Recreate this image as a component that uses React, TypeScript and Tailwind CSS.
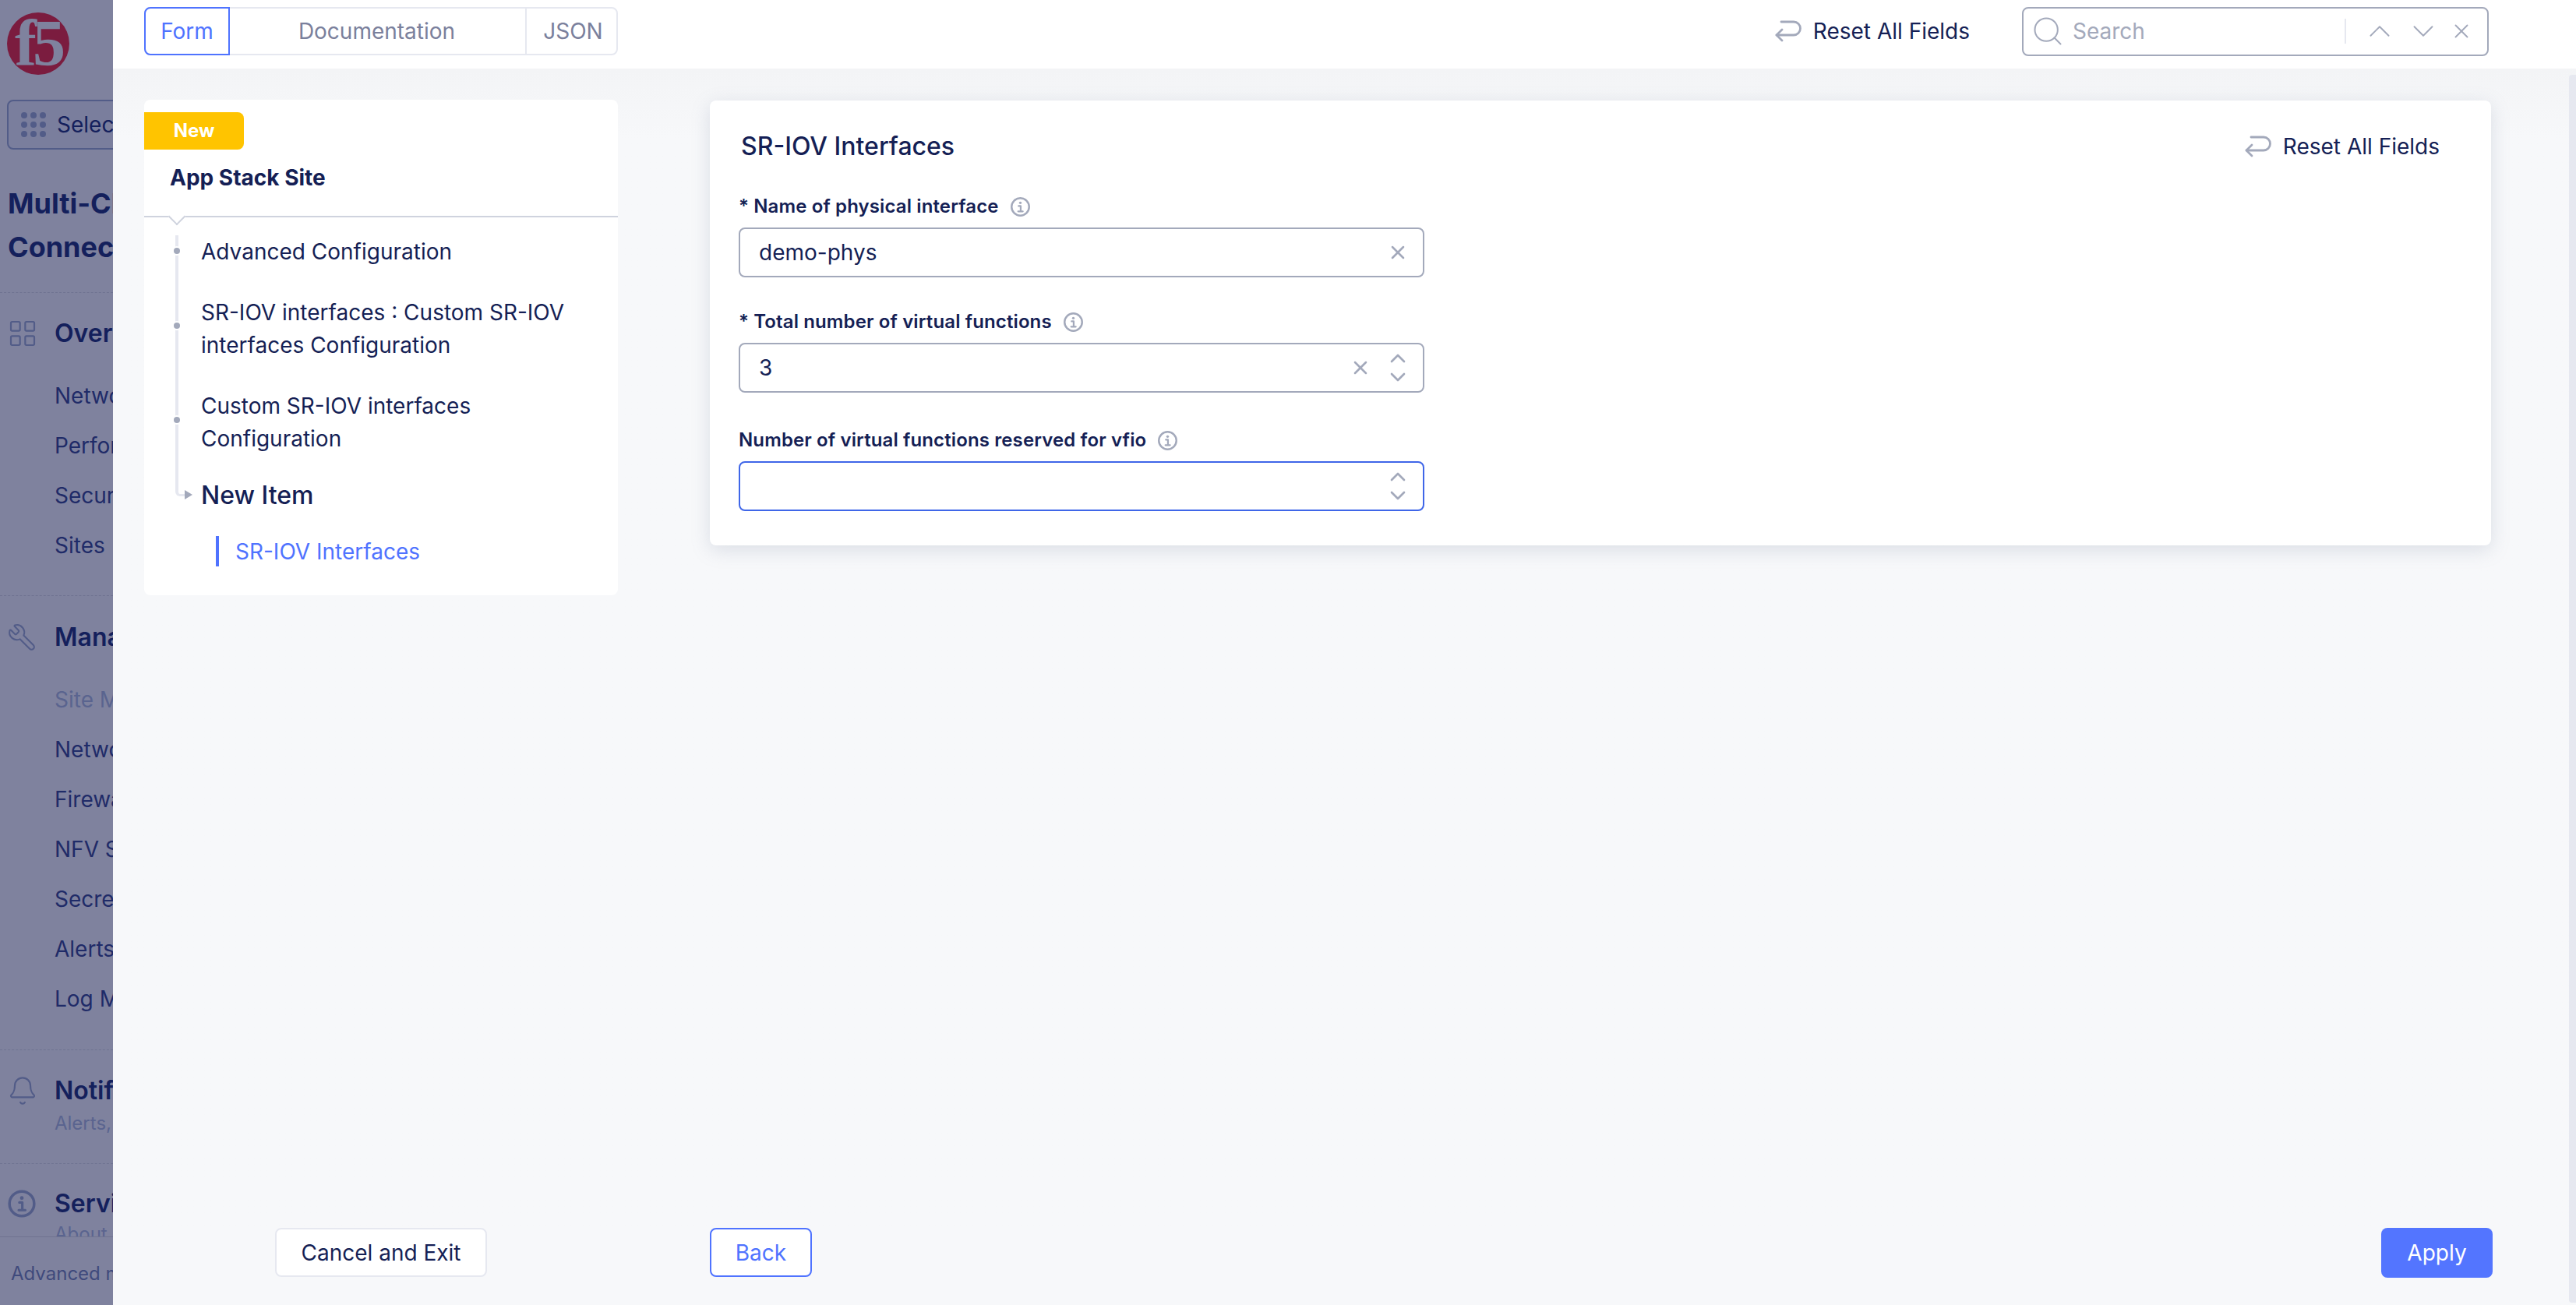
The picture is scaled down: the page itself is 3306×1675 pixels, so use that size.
import { X, ChevronUp, ChevronDown, Search, Bell, Wrench, LayoutGrid } from "lucide-react";

function ResetIcon({ className }: { className?: string }) {
  return (
    <svg viewBox="0 0 34 28" className={className} fill="none" stroke="#a3a9bb" strokeWidth="2.8" strokeLinecap="round" strokeLinejoin="round">
      <path d="M8 2 H24 a8.5 8.5 0 0 1 0 17 H2" />
      <path d="M9 12 L2 19 L9 26" />
    </svg>
  );
}

function InfoIcon({ size, className }: { size: number; className?: string }) {
  return (
    <svg viewBox="0 0 24 24" width={size} height={size} className={className} fill="none" stroke="currentColor" strokeLinecap="round" strokeLinejoin="round">
      <circle cx="12" cy="12" r="10" strokeWidth="2.2" />
      <path d="M10 11 H12.4 V17 M9.5 17.2 H14.8" strokeWidth="2" />
      <circle cx="12" cy="7.4" r="1.5" fill="currentColor" stroke="none" />
    </svg>
  );
}

function SideSub({ children, muted }: { children: string; muted?: boolean }) {
  return <div className={`h-[64px] pl-[70px] flex items-center text-[28px] whitespace-nowrap ${muted ? "text-[#5a648f]" : "text-[#1f2b68]"}`}>{children}</div>;
}

function SideHead({ icon, children }: { icon: React.ReactNode; children: string }) {
  return (
    <div className="flex items-center h-[40px]">
      <div className="w-[70px] shrink-0 pl-[9px] flex items-center text-[#525c88]">{icon}</div>
      <div className="text-[32px] font-semibold whitespace-nowrap text-[#14205c]">{children}</div>
    </div>
  );
}

function Sidebar() {
  return (
    <aside className="w-[145px] shrink-0 h-full overflow-hidden bg-[#7f829e] flex flex-col">
      <div className="ml-[9px] mt-[16px] w-[80px] h-[80px] shrink-0 rounded-full bg-[#7b1c3f] flex items-center justify-center text-[#7f829e] text-[84px] font-bold leading-none tracking-[-5px] overflow-hidden" style={{ fontFamily: '"Liberation Serif", serif' }}>
        f5
      </div>
      <div className="ml-[9px] mt-[32px] w-[300px] h-[64px] shrink-0 rounded-[8px] border-2 border-[#525c88] bg-[#7a7e9d] flex items-center pl-[16px] gap-[14px]">
        <div className="grid grid-cols-3 gap-[4px] w-[32px] shrink-0">
          {Array.from({ length: 9 }).map((_, i) => (
            <div key={i} className="w-[8px] h-[8px] rounded-full bg-[#525c88]" />
          ))}
        </div>
        <span className="text-[28px] text-[#14205c] whitespace-nowrap">Select service</span>
      </div>
      <div className="ml-[10px] mt-[41px] w-[400px] shrink-0 text-[36px] leading-[56px] font-bold text-[#14205c]">
        Multi-Cloud Network Connect
      </div>
      <div className="mt-[30px] border-t border-dashed border-[#6f7391]" />
      <div className="mt-[32px]">
        <SideHead icon={<LayoutGrid size={40} strokeWidth={1.3} />}>Overview</SideHead>
      </div>
      <div className="mt-[28px]">
        <SideSub>Networking</SideSub>
        <SideSub>Performance</SideSub>
        <SideSub>Security</SideSub>
        <SideSub>Sites</SideSub>
      </div>
      <div className="mt-[32px] border-t border-dashed border-[#6f7391]" />
      <div className="mt-[33px]">
        <SideHead icon={<Wrench size={38} strokeWidth={1.3} className="-scale-x-100" />}>Manage</SideHead>
      </div>
      <div className="mt-[28px]">
        <SideSub muted>Site Management</SideSub>
        <SideSub>Networking</SideSub>
        <SideSub>Firewall</SideSub>
        <SideSub>NFV Services</SideSub>
        <SideSub>Secrets</SideSub>
        <SideSub>Alerts</SideSub>
        <SideSub>Log Management</SideSub>
      </div>
      <div className="mt-[33px] border-t border-dashed border-[#6f7391]" />
      <div className="mt-[32px]">
        <SideHead icon={<Bell size={40} strokeWidth={1.3} />}>Notifications</SideHead>
      </div>
      <div className="pl-[70px] mt-[7px] text-[24px] leading-[30px] text-[#5a648f] whitespace-nowrap">Alerts, Audit</div>
      <div className="mt-[36px] border-t border-dashed border-[#6f7391]" />
      <div className="mt-[31px]">
        <SideHead icon={<InfoIcon size={38} />}>Services</SideHead>
      </div>
      <div className="pl-[70px] mt-[4px] h-[18px] overflow-hidden text-[24px] leading-[30px] text-[#5a648f] whitespace-nowrap">About</div>
      <div className="border-t border-[#6f7391]" />
      <div className="pl-[14px] mt-[32px] text-[24px] leading-[30px] text-[#3f4a7c] whitespace-nowrap">Advanced monitoring</div>
    </aside>
  );
}

function Tabs() {
  return (
    <div className="flex w-[608px] h-[62px] text-[28px] rounded-[8px] border-2 border-[#e6e8f0] text-[#7a809c]">
      <div className="-m-[2px] w-[110px] h-[62px] shrink-0 rounded-l-[8px] border-2 border-[#4f73ff] text-[#4f73ff] flex items-center justify-center">Form</div>
      <div className="flex-1 flex items-center justify-center border-r-2 border-[#e6e8f0]">Documentation</div>
      <div className="w-[115px] shrink-0 pl-[4px] flex items-center justify-center">JSON</div>
    </div>
  );
}

function ResetAll() {
  return (
    <div className="flex items-center gap-[15px] text-[28px] text-[#151f55] whitespace-nowrap">
      <ResetIcon className="w-[34px] h-[28px]" />
      <span>Reset All Fields</span>
    </div>
  );
}

function SearchBox() {
  return (
    <div className="ml-[67px] w-[599px] h-[63px] rounded-[8px] border-2 border-[#a3a9bb] flex items-center pl-[9px] text-[#a3a9bb]">
      <Search size={44} strokeWidth={1.1} className="shrink-0" />
      <span className="ml-[10px] text-[28px] w-[349px]">Search</span>
      <div className="h-[32px] border-l-2 border-[#e6e8f0]" />
      <ChevronUp size={46} strokeWidth={1} className="ml-[20px] shrink-0" />
      <ChevronDown size={46} strokeWidth={1} className="ml-[10px] shrink-0" />
      <X size={30} strokeWidth={1.5} className="ml-[11px] shrink-0" />
    </div>
  );
}

function Label({ children }: { children: string }) {
  return (
    <div className="flex items-center h-[30px] text-[24px] tracking-[0.12px] font-semibold text-[#151f55] whitespace-nowrap">
      <span>{children}</span>
      <InfoIcon size={27} className="ml-[14px] text-[#a3a9bb]" />
    </div>
  );
}

function Field({ value, focus, clear, spin }: { value?: string; focus?: boolean; clear?: boolean; spin?: boolean }) {
  return (
    <div className={`mt-[12px] w-[880px] h-[64px] rounded-[8px] border-2 flex items-center pl-[24px] pr-[16px] text-[#a3a9bb] ${focus ? "border-[#3f66e8]" : "border-[#a3a9bb]"}`}>
      <span className="flex-1 text-[28px] text-[#151f55]">{value}</span>
      {clear && <X size={28} strokeWidth={2.2} className={spin ? "" : "mr-[2px]"} />}
      {spin && (
        <div className={`flex flex-col ${clear ? "ml-[18px]" : ""}`}>
          <ChevronUp size={32} strokeWidth={2} className="-my-[4px]" />
          <ChevronDown size={32} strokeWidth={2} className="-my-[4px]" />
        </div>
      )}
    </div>
  );
}

function Panel() {
  return (
    <div className="w-[608px] h-[636px] shrink-0 bg-white rounded-[8px] pt-[16px]">
      <div className="w-[128px] h-[48px] bg-[#ffc400] rounded-r-[8px] flex items-center justify-center text-white text-[24px] font-bold">New</div>
      <div className="h-[87px] pl-[33px] pb-[14px] flex items-center text-[28px] font-bold text-[#151f55] border-b-2 border-[#cfd3de] relative">
        App Stack Site
        <div className="absolute left-[34px] -bottom-[9px] w-[16px] h-[16px] bg-white border-r-2 border-b-2 border-[#cfd3de] rotate-45" />
      </div>
      <div className="relative mt-[23px] pl-[73px] pr-[40px] text-[28px] leading-[42px] text-[#151f55]">
        <div className="absolute left-[40px] top-0 h-[335px] w-[14px] border-l-4 border-b-[3px] border-[#e6e8f0] rounded-bl-[6px]" />
        <div className="absolute left-[52px] top-[327px] w-0 h-0 border-y-[6px] border-y-transparent border-l-[10px] border-l-[#a3a9bb]" />
        <div className="relative">
          Advanced Configuration
          <div className="absolute -left-[35px] top-[16px] w-[8px] h-[8px] rounded-full bg-[#a3a9bb] ring-2 ring-white" />
        </div>
        <div className="relative mt-[36px]">
          SR-IOV interfaces : Custom SR-IOV interfaces Configuration
          <div className="absolute -left-[35px] top-[34px] w-[8px] h-[8px] rounded-full bg-[#a3a9bb] ring-2 ring-white" />
        </div>
        <div className="relative mt-[36px]">
          Custom SR-IOV interfaces Configuration
          <div className="absolute -left-[35px] top-[35px] w-[8px] h-[8px] rounded-full bg-[#a3a9bb] ring-2 ring-white" />
        </div>
        <div className="mt-[28px] text-[32px] leading-[48px] font-medium">New Item</div>
        <div className="mt-[28px] ml-[19px] h-[39px] pl-[21px] border-l-4 border-[#4f73ff] text-[#4f73ff] flex items-center">SR-IOV Interfaces</div>
      </div>
    </div>
  );
}

function Card() {
  return (
    <div className="mt-[1px] w-[2286px] h-[571px] bg-white rounded-[8px] shadow-[0_6px_24px_rgba(120,130,160,0.22)] pl-[37px] pr-[66px] pt-[40px]">
      <div className="flex items-center justify-between h-[38px] pl-[3px]">
        <div className="text-[32px] font-medium text-[#151f55]">SR-IOV Interfaces</div>
        <ResetAll />
      </div>
      <div className="mt-[43px]">
        <Label>* Name of physical interface</Label>
        <Field value="demo-phys" clear />
      </div>
      <div className="mt-[42px]">
        <Label>* Total number of virtual functions</Label>
        <Field value="3" clear spin />
      </div>
      <div className="mt-[46px]">
        <Label>Number of virtual functions reserved for vfio</Label>
        <Field focus spin />
      </div>
    </div>
  );
}

export default function App() {
  return (
    <div className="relative w-[3306px] h-[1675px] overflow-hidden flex bg-[#f7f8fa]" style={{ fontFamily: 'Inter, "Liberation Sans", sans-serif' }}>
      <Sidebar />
      <main className="flex-1 min-w-0 flex flex-col">
        <header className="h-[88px] shrink-0 bg-white flex items-center pl-[40px] pr-[112px] pb-[8px]">
          <Tabs />
          <div className="flex-1" />
          <ResetAll />
          <SearchBox />
        </header>
        <div className="flex-1 flex pl-[40px] pt-[40px] gap-[118px] bg-gradient-to-b from-[#f3f4f6] to-[#f7f8fa] to-[90px] items-start">
          <Panel />
          <Card />
        </div>
        <footer className="flex h-[99px] shrink-0 pl-[40px] pr-[107px] gap-[118px]">
          <div className="w-[608px] shrink-0 flex justify-center">
            <button className="w-[272px] h-[63px] rounded-[8px] border-2 border-[#e6e8f0] bg-white text-[28px] text-[#151f55]">Cancel and Exit</button>
          </div>
          <div className="flex-1 flex justify-between">
            <button className="w-[131px] h-[63px] rounded-[8px] border-2 border-[#4f73ff] bg-white text-[28px] text-[#4f73ff]">Back</button>
            <button className="w-[143px] h-[64px] rounded-[8px] bg-[#5375ff] text-[28px] text-white">Apply</button>
          </div>
        </footer>
      </main>
      <div className="absolute right-0 top-[96px] bottom-[3px] w-[9px] rounded-l-[4px] bg-[#e6e8f0]" />
    </div>
  );
}
